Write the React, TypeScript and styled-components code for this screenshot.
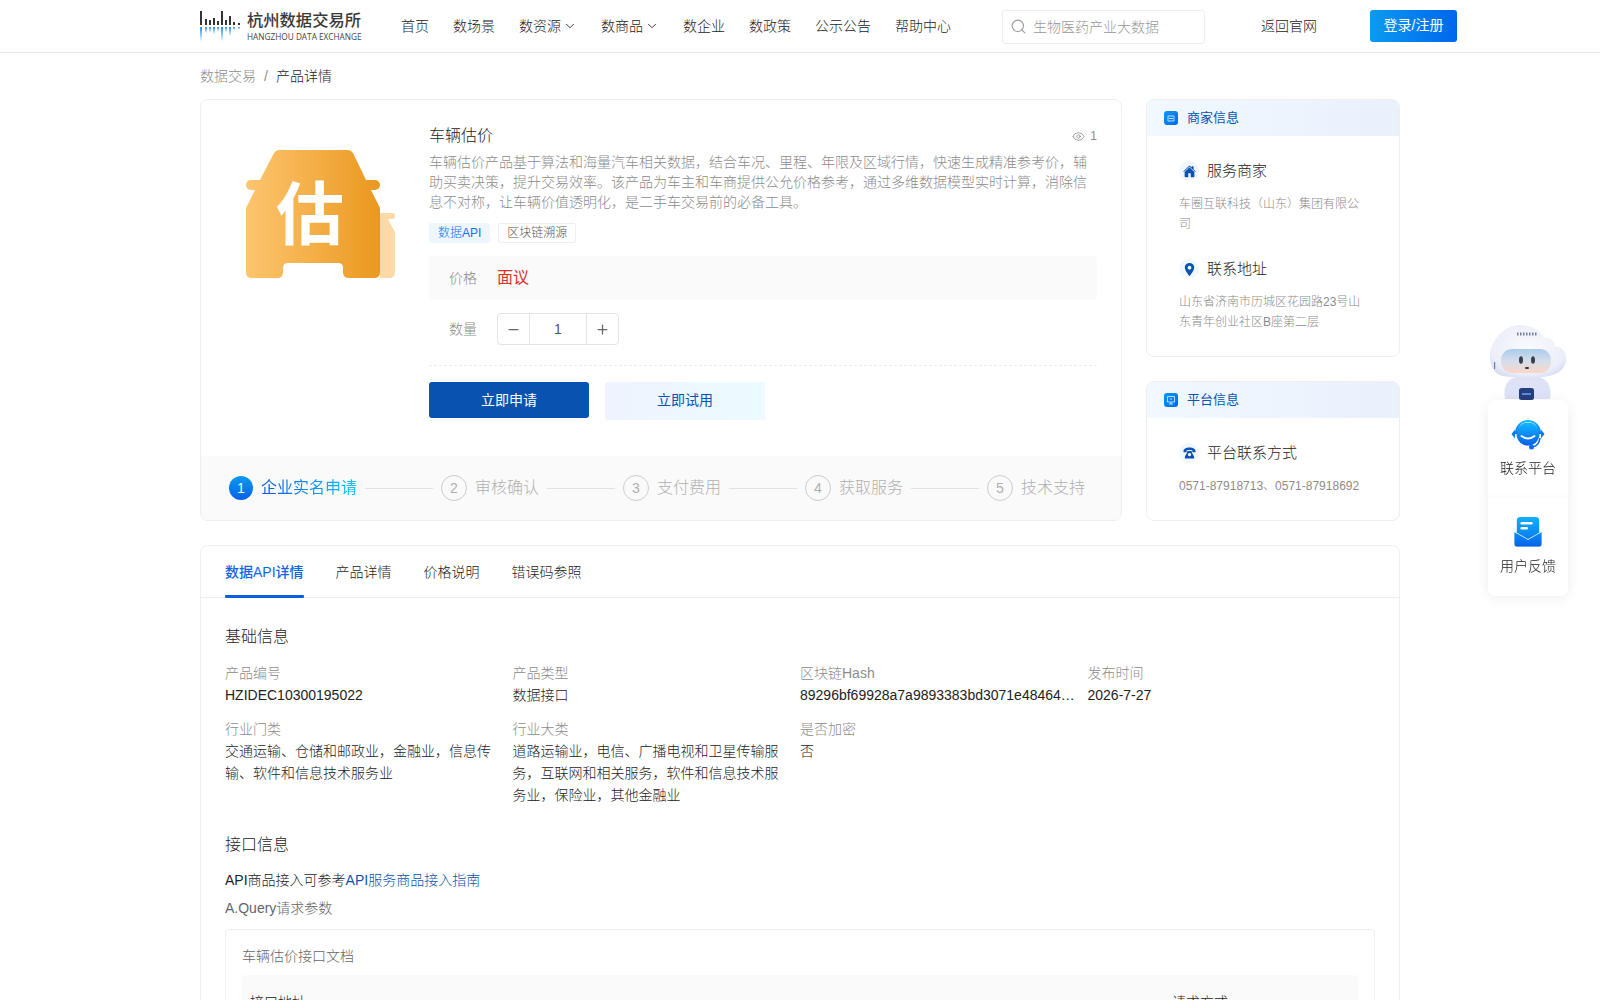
import styled, { createGlobalStyle } from "styled-components";
import { ChevronDown, Eye, Minus, Plus, Search } from "lucide-react";
import { IoHome, IoLocationSharp } from "react-icons/io5";

const navItems = [
  { label: "首页" },
  { label: "数场景" },
  { label: "数资源", menu: true },
  { label: "数商品", menu: true },
  { label: "数企业" },
  { label: "数政策" },
  { label: "公示公告" },
  { label: "帮助中心" },
];

const steps = ["企业实名申请", "审核确认", "支付费用", "获取服务", "技术支持"];

const tabs = ["数据API详情", "产品详情", "价格说明", "错误码参照"];

const baseInfo = [
  { label: "产品编号", value: "HZIDEC10300195022" },
  { label: "产品类型", value: "数据接口" },
  {
    label: "区块链Hash",
    value: "89296bf69928a7a9893383bd3071e484640c1f5e7a2d",
    clip: true,
  },
  { label: "发布时间", value: "2026-7-27" },
  {
    label: "行业门类",
    value: "交通运输、仓储和邮政业，金融业，信息传输、软件和信息技术服务业",
  },
  {
    label: "行业大类",
    value:
      "道路运输业，电信、广播电视和卫星传输服务，互联网和相关服务，软件和信息技术服务业，保险业，其他金融业",
  },
  { label: "是否加密", value: "否" },
];

const logoBars = [
  [0, 14],
  [5, 6],
  [9, 5],
  [13, 7],
  [17, 4],
  [21, 14],
  [25, 5],
  [29, 9],
  [33, 3],
  [38, 2],
];

const Logo = () => (
  <LogoWrap>
    <svg width="42" height="32" viewBox="0 0 42 32">
      <defs>
        <linearGradient id="logoFade" x1="0" y1="0" x2="0" y2="1">
          <stop offset="0" stopColor="#1f8cf5" />
          <stop offset="1" stopColor="#1f8cf5" stopOpacity="0.05" />
        </linearGradient>
      </defs>
      {logoBars.map(([x, h]) => (
        <g key={x}>
          <rect x={x} y={15 - h} width="2" height={h} fill="#333" />
          <rect x={x} y="17" width="2" height={h} fill="url(#logoFade)" />
        </g>
      ))}
    </svg>
    <LogoText>
      <LogoName>杭州数据交易所</LogoName>
      <LogoSub>HANGZHOU DATA EXCHANGE</LogoSub>
    </LogoText>
  </LogoWrap>
);

const CAR_PATH =
  "M28 3Q30 0 33 0H102Q105 0 107 3L120 30H129a5 5 0 0 1 0 10H125L134 58V122q0 6-6 6H103q-6 0-6-6v-4q0-5-5-5H42q-5 0-5 5v4q0 6-6 6H6q-6 0-6-6V58L9 40H5a5 5 0 0 1 0-10H14Z";

const CarImage = () => (
  <svg width="149" height="128" viewBox="0 0 149 128">
    <defs>
      <linearGradient id="carFill" x1="0" y1="0" x2="1" y2="0">
        <stop offset="0" stopColor="#fdc56f" />
        <stop offset="1" stopColor="#ea981f" />
      </linearGradient>
    </defs>
    <path
      d="M134 63H146a3 3 0 0 1 0 6H142L149 82V122q0 6-6 6H134Z"
      fill="#fdd9a8"
    />
    <path d={CAR_PATH} fill="url(#carFill)" />
    <CarGlyph x="64" y="89" textAnchor="middle">
      估
    </CarGlyph>
  </svg>
);

const PanelIcon = ({ kind }: { kind: "shop" | "screen" }) => (
  <svg width="14" height="14" viewBox="0 0 14 14">
    <defs>
      <linearGradient id={`panel-${kind}`} x1="0" y1="0" x2="1" y2="1">
        <stop offset="0" stopColor="#0a9bf0" />
        <stop offset="1" stopColor="#0066ee" />
      </linearGradient>
    </defs>
    <rect width="14" height="14" rx="3" fill={`url(#panel-${kind})`} />
    {kind === "shop" ? (
      <path
        d="M4 5h6v5H4zM5 7.500h4"
        fill="none"
        stroke="#cfe6ff"
        strokeWidth="0.9"
      />
    ) : (
      <path
        d="M3.500 3.500h7v5.500h-7zM7 9v2M5 11h4M6 6h2"
        fill="none"
        stroke="#cfe6ff"
        strokeWidth="0.9"
      />
    )}
  </svg>
);

const PhoneGlyph = () => (
  <svg width="13" height="12" viewBox="0 0 13 12">
    <path
      d="M0.500 4.200C0.500 1.800 3.200 0.500 6.500 0.500s6 1.300 6 3.700v1H9.400V3.400C8.600 3 7.600 2.900 6.500 2.900S4.400 3 3.600 3.400v1.800H0.500Z"
      fill="#0a52b0"
    />
    <path
      d="M4.500 4h4l0.600 2 2 3.600V11.500H1.900V9.600L3.900 6Zm2 1.900a1.700 1.700 0 1 0 0 3.400 1.700 1.700 0 0 0 0-3.400Z"
      fill="#0a52b0"
    />
  </svg>
);

const ContactIcon = () => (
  <ContactArt width="34" height="32" viewBox="0 0 34 32">
    <defs>
      <linearGradient id="contactFill" x1="0" y1="0" x2="0" y2="1">
        <stop offset="0" stopColor="#12b8ff" />
        <stop offset="1" stopColor="#0560ea" />
      </linearGradient>
    </defs>
    <path
      d="M5 15C5 7 10.500 2 17 2s12 5 12 13"
      fill="none"
      stroke="url(#contactFill)"
      strokeWidth="2"
    />
    <path d="M4 10.500 0.500 15 4 19.500Z" fill="#0a7bf0" />
    <path d="M30 10.500 33.500 15 30 19.500Z" fill="#0a7bf0" />
    <circle cx="17" cy="15" r="11.500" fill="url(#contactFill)" />
    <path
      d="M10.500 17q6.500 5 13 0"
      fill="none"
      stroke="#fff"
      strokeWidth="2"
      strokeLinecap="round"
    />
    <path d="M29 19q-1 8-8 9" fill="none" stroke="#0a6bf0" strokeWidth="1.600" />
    <circle cx="20.500" cy="28" r="2.500" fill="#0a6bf0" />
  </ContactArt>
);

const FeedbackIcon = () => (
  <svg width="28" height="30" viewBox="0 0 30 30" preserveAspectRatio="none">
    <defs>
      <linearGradient id="mailTop" x1="0" y1="0" x2="0" y2="1">
        <stop offset="0" stopColor="#12b0fb" />
        <stop offset="1" stopColor="#0a7bf0" />
      </linearGradient>
      <linearGradient id="mailBody" x1="0" y1="0" x2="0" y2="1">
        <stop offset="0" stopColor="#0a8ff5" />
        <stop offset="1" stopColor="#0560ea" />
      </linearGradient>
    </defs>
    <rect x="3" y="0" width="24" height="22" rx="3.500" fill="url(#mailTop)" />
    <rect x="7" y="5" width="13" height="2.400" rx="1.200" fill="#fff" />
    <rect x="7" y="10" width="8" height="2.400" rx="1.200" fill="#fff" />
    <path
      d="M0 14.500 15 22.500 30 14.500V27a3 3 0 0 1-3 3H3a3 3 0 0 1-3-3Z"
      fill="url(#mailBody)"
      stroke="#fff"
      strokeWidth="0.8"
    />
  </svg>
);

const Robot = () => (
  <RobotArt width="78" height="75" viewBox="0 0 78 75">
    <defs>
      <radialGradient id="robotHead" cx="0.5" cy="0.45" r="0.65">
        <stop offset="0" stopColor="#fafbfe" />
        <stop offset="0.75" stopColor="#eceef9" />
        <stop offset="1" stopColor="#cfd5ef" />
      </radialGradient>
      <linearGradient id="robotVisor" x1="0" y1="0" x2="0" y2="1">
        <stop offset="0" stopColor="#a9cbea" />
        <stop offset="0.5" stopColor="#d4deec" />
        <stop offset="1" stopColor="#fbd6c8" />
      </linearGradient>
      <filter id="robotSoft">
        <feGaussianBlur stdDeviation="0.6" />
      </filter>
    </defs>
    <g filter="url(#robotSoft)">
      <path d="M16 74q-3-17 10-22h24q14 4 11 22Z" fill="#dde2f7" />
      <path
        d="M1 33C0 18 14 0 31 0c11 0 20 5 24 13 6-1 11 3 11 8 8 1 12 8 11 14-1 9-8 14-17 16-8 2-36 2-46 0C7 50 1 42 1 33Z"
        fill="url(#robotHead)"
      />
      <rect x="12" y="24" width="50" height="24" rx="11" fill="url(#robotVisor)" />
    </g>
    <rect x="30" y="63" width="15" height="12" rx="2.500" fill="#25407e" />
    <rect x="33" y="68" width="9" height="2" fill="#5b8fd8" />
    <path d="M28 9h20" stroke="#6f7f9c" strokeWidth="3" strokeDasharray="1.500 1.500" />
    <ellipse cx="32" cy="35" rx="2" ry="3.800" fill="#3b3f4d" />
    <ellipse cx="44" cy="35" rx="2" ry="3.800" fill="#3b3f4d" />
    <ellipse cx="38" cy="43" rx="2.200" ry="1.100" fill="#2c2c33" />
    <rect x="5" y="37" width="1.200" height="7" fill="#6f7f9c" />
  </RobotArt>
);

const App = () => {
  return (
    <>
      <GlobalStyle />
      <Header>
        <Logo />
        <Nav>
          {navItems.map((item) => (
            <NavItem key={item.label}>
              {item.label}
              {item.menu && <ChevronDown size={14} strokeWidth={1.5} />}
            </NavItem>
          ))}
        </Nav>
        <SearchBox>
          <Search size={17} strokeWidth={1.5} color="#999" />
          <span>生物医药产业大数据</span>
        </SearchBox>
        <BackLink>返回官网</BackLink>
        <LoginButton>登录/注册</LoginButton>
      </Header>

      <Page>
        <Breadcrumb>
          <span>数据交易</span>
          <Slash>/</Slash>
          <strong>产品详情</strong>
        </Breadcrumb>

        <TopRow>
          <ProductCard>
            <ProductBody>
              <ImageCol>
                <CarImage />
              </ImageCol>
              <InfoCol>
                <TitleRow>
                  <Title>车辆估价</Title>
                  <Views>
                    <Eye size={13} strokeWidth={1.5} />1
                  </Views>
                </TitleRow>
                <Desc>
                  车辆估价产品基于算法和海量汽车相关数据，结合车况、里程、年限及区域行情，快速生成精准参考价，辅助买卖决策，提升交易效率。该产品为车主和车商提供公允价格参考，通过多维数据模型实时计算，消除信息不对称，让车辆价值透明化，是二手车交易前的必备工具。
                </Desc>
                <Tags>
                  <Tag $primary>数据API</Tag>
                  <Tag>区块链溯源</Tag>
                </Tags>
                <PriceRow>
                  <FieldLabel>价格</FieldLabel>
                  <Price>面议</Price>
                </PriceRow>
                <QtyRow>
                  <FieldLabel>数量</FieldLabel>
                  <Stepper>
                    <StepButton>
                      <Minus size={15} strokeWidth={2} />
                    </StepButton>
                    <StepValue>1</StepValue>
                    <StepButton>
                      <Plus size={15} strokeWidth={2} />
                    </StepButton>
                  </Stepper>
                </QtyRow>
                <Actions>
                  <ApplyButton>立即申请</ApplyButton>
                  <TryButton>立即试用</TryButton>
                </Actions>
              </InfoCol>
            </ProductBody>
            <Steps>
              {steps.map((step, index) => (
                <Step key={step}>
                  {index > 0 && <StepLine />}
                  <StepNumber $active={index === 0}>{index + 1}</StepNumber>
                  <StepText $active={index === 0}>{step}</StepText>
                </Step>
              ))}
            </Steps>
          </ProductCard>

          <SideCol>
            <SideCard>
              <SideHeader>
                <PanelIcon kind="shop" />
                商家信息
              </SideHeader>
              <SideBody>
                <SideItem>
                  <SideTitle>
                    <IconDot>
                      <IoHome size={13} />
                    </IconDot>
                    服务商家
                  </SideTitle>
                  <SideText>车圈互联科技（山东）集团有限公司</SideText>
                </SideItem>
                <SideItem>
                  <SideTitle>
                    <IconDot>
                      <IoLocationSharp size={15} />
                    </IconDot>
                    联系地址
                  </SideTitle>
                  <SideText>山东省济南市历城区花园路23号山东青年创业社区B座第二层</SideText>
                </SideItem>
              </SideBody>
            </SideCard>
            <SideCard>
              <SideHeader>
                <PanelIcon kind="screen" />
                平台信息
              </SideHeader>
              <SideBody>
                <SideItem>
                  <SideTitle>
                    <IconDot>
                      <PhoneGlyph />
                    </IconDot>
                    平台联系方式
                  </SideTitle>
                  <SideText>0571-87918713、0571-87918692</SideText>
                </SideItem>
              </SideBody>
            </SideCard>
          </SideCol>
        </TopRow>

        <DetailCard>
          <TabBar>
            {tabs.map((tab, index) => (
              <Tab key={tab} $active={index === 0}>
                {tab}
              </Tab>
            ))}
          </TabBar>
          <DetailBody>
            <SectionTitle>基础信息</SectionTitle>
            <InfoGrid>
              {baseInfo.map((item) => (
                <InfoCell key={item.label}>
                  <InfoLabel>{item.label}</InfoLabel>
                  <InfoValue $clip={item.clip}>{item.value}</InfoValue>
                </InfoCell>
              ))}
            </InfoGrid>
            <ApiTitle>接口信息</ApiTitle>
            <GuideLine>
              API商品接入可参考<GuideLink>API服务商品接入指南</GuideLink>
            </GuideLine>
            <QueryLine>A.Query请求参数</QueryLine>
            <DocBox>
              <DocTitle>车辆估价接口文档</DocTitle>
              <DocHead>
                <span>接口地址</span>
                <span>请求方式</span>
              </DocHead>
            </DocBox>
          </DetailBody>
        </DetailCard>
      </Page>

      <Floating>
        <Robot />
        <FloatPanel>
          <FloatItem>
            <ContactIcon />
            联系平台
          </FloatItem>
          <FloatItem>
            <FeedbackIcon />
            用户反馈
          </FloatItem>
        </FloatPanel>
      </Floating>
    </>
  );
};

export default App;

const GlobalStyle = createGlobalStyle`
  html, body {
    margin: 0;
    height: 100%;
    overflow: hidden;
    background: #fff;
  }

  body {
    font-family: "Liberation Sans", "Noto Sans CJK SC", sans-serif;
    font-size: 14px;
    font-weight: 300;
    line-height: 22px;
    color: #222;
  }

  * {
    box-sizing: border-box;
  }
`;

const Header = styled.header`
  display: flex;
  align-items: center;
  height: 53px;
  padding: 0 143px 0 200px;
  border-bottom: 1px solid #e8e8e8;
`;

const LogoWrap = styled.div`
  display: flex;
  align-items: center;
  flex: none;
  gap: 5px;
  width: 161px;
  height: 52px;
`;

const LogoText = styled.div`
  display: flex;
  flex-direction: column;
  width: 114px;
`;

const LogoName = styled.div`
  font-size: 16.3px;
  line-height: 22px;
  font-weight: 500;
  color: #3a3a3a;
  white-space: nowrap;
`;

const LogoSub = styled.div`
  font-family: "Open Sans", sans-serif;
  font-size: 8.25px;
  font-weight: 400;
  line-height: 12px;
  color: #444;
  white-space: nowrap;
`;

const Nav = styled.nav`
  display: flex;
  flex: none;
  gap: 24px;
  margin-left: 40px;
`;

const NavItem = styled.a`
  display: flex;
  align-items: center;
  gap: 2px;
  color: #222;
  white-space: nowrap;
`;

const SearchBox = styled.div`
  display: flex;
  align-items: center;
  flex: none;
  gap: 6px;
  width: 203px;
  height: 34px;
  margin: 1px 0 0 51px;
  padding-left: 7px;
  border: 1px solid #eee;
  border-radius: 3px;
  color: #999;
  white-space: nowrap;
`;

const BackLink = styled.a`
  flex: none;
  margin-left: 56px;
  color: #222;
`;

const LoginButton = styled.button`
  flex: none;
  width: 87px;
  height: 32px;
  margin-left: 53px;
  padding: 0 0 2px;
  border: 0;
  border-radius: 3px;
  background: linear-gradient(90deg, #0a9bf0, #0065ee);
  color: #fff;
  font: inherit;
  font-weight: 400;
`;

const Page = styled.main`
  width: 1200px;
  margin: 0 auto;
`;

const Breadcrumb = styled.div`
  display: flex;
  align-items: center;
  height: 46px;
  color: #8c8c8c;

  strong {
    font-weight: 300;
    color: #222;
  }
`;

const Slash = styled.span`
  margin: 0 8px;
`;

const TopRow = styled.div`
  display: flex;
  gap: 24px;
`;

const ProductCard = styled.section`
  display: flex;
  flex-direction: column;
  width: 922px;
  border: 1px solid #eee;
  border-radius: 8px;
  overflow: hidden;
`;

const ProductBody = styled.div`
  display: flex;
  flex: 1;
  padding: 23px 24px 0 45px;
`;

const ImageCol = styled.div`
  flex: none;
  width: 149px;
  margin-right: 34px;
  padding-top: 27px;
`;

const CarGlyph = styled.text`
  font-family: "Noto Sans CJK SC", sans-serif;
  font-size: 68px;
  font-weight: 700;
  fill: #fff;
`;

const InfoCol = styled.div`
  flex: 1;
  min-width: 0;
`;

const TitleRow = styled.div`
  display: flex;
  align-items: center;
  justify-content: space-between;
  height: 24px;
  padding-top: 2px;
`;

const Title = styled.h1`
  margin: 0;
  font-size: 16px;
  font-weight: 300;
  color: #222;
`;

const Views = styled.span`
  display: flex;
  align-items: center;
  gap: 5px;
  font-size: 12px;
  color: #8c8c8c;
`;

const Desc = styled.p`
  margin: 5px 0 0;
  line-height: 20px;
  color: #8c8c8c;
`;

const Tags = styled.div`
  display: flex;
  gap: 8px;
  margin-top: 11px;
`;

const Tag = styled.span<{ $primary?: boolean }>`
  height: 20px;
  padding: 0 8px;
  border: 1px solid ${(p) => (p.$primary ? "#eef6ff" : "#eee")};
  border-radius: 2px;
  background: ${(p) => (p.$primary ? "#eef6ff" : "#fff")};
  color: ${(p) => (p.$primary ? "#0f6ff5" : "#555")};
  font-size: 12px;
  line-height: 18px;
`;

const PriceRow = styled.div`
  display: flex;
  align-items: center;
  height: 44px;
  margin-top: 13px;
  padding-left: 20px;
  border-radius: 4px;
  background: #fafafa;
`;

const FieldLabel = styled.span`
  width: 48px;
  color: #8c8c8c;
`;

const Price = styled.span`
  font-size: 16px;
  font-weight: 400;
  color: #d9302b;
`;

const QtyRow = styled.div`
  display: flex;
  align-items: center;
  height: 32px;
  margin-top: 13px;
  padding-left: 20px;
`;

const Stepper = styled.div`
  display: flex;
  height: 32px;
  border: 1px solid #e4e4e4;
  border-radius: 4px;
`;

const StepButton = styled.span`
  display: flex;
  align-items: center;
  justify-content: center;
  width: 31px;
  color: #666;
`;

const StepValue = styled.span`
  width: 58px;
  border-left: 1px solid #e4e4e4;
  border-right: 1px solid #e4e4e4;
  line-height: 30px;
  text-align: center;
  color: #555;
`;

const Actions = styled.div`
  display: flex;
  align-items: flex-start;
  gap: 16px;
  margin-top: 20px;
  padding-top: 16px;
  border-top: 1px dashed #eee;
`;

const ApplyButton = styled.button`
  width: 160px;
  height: 36px;
  padding: 0;
  border: 0;
  border-radius: 3px;
  background: #0a52b0;
  color: #fff;
  font: inherit;
  font-weight: 400;
`;

const TryButton = styled.button`
  width: 160px;
  height: 38px;
  padding: 0 0 2px;
  border: 0;
  border-radius: 3px;
  background: linear-gradient(90deg, #eef3fe, #ecfbff);
  color: #0a52b0;
  font: inherit;
  font-weight: 400;
`;

const Steps = styled.div`
  display: flex;
  align-items: center;
  justify-content: space-between;
  flex: none;
  height: 64px;
  padding: 0 36px 0 28px;
  background: #fafafa;
`;

const Step = styled.div`
  display: flex;
  align-items: center;
  gap: 8px;
`;

const StepLine = styled.span`
  width: 68px;
  height: 1px;
  background: #e2e2e2;
`;

const StepNumber = styled.span<{ $active: boolean }>`
  display: flex;
  align-items: center;
  justify-content: center;
  width: ${(p) => (p.$active ? "24px" : "26px")};
  height: ${(p) => (p.$active ? "24px" : "26px")};
  border-radius: 50%;
  border: ${(p) => (p.$active ? "0" : "1px solid #ccc")};
  background: ${(p) =>
    p.$active ? "linear-gradient(180deg, #0a9bf0, #0560ea)" : "transparent"};
  color: ${(p) => (p.$active ? "#fff" : "#b0b0b0")};
  font-size: 14px;
`;

const StepText = styled.span<{ $active: boolean }>`
  font-size: 16px;
  color: #b0b0b0;
  ${(p) =>
    p.$active &&
    `
    font-weight: 400;
    background: linear-gradient(90deg, #0a55e0, #10c8ff);
    -webkit-background-clip: text;
    background-clip: text;
    color: transparent;
  `}
`;

const SideCol = styled.aside`
  display: flex;
  flex-direction: column;
  gap: 24px;
  width: 254px;
`;

const SideCard = styled.section`
  border: 1px solid #eee;
  border-radius: 8px;
  overflow: hidden;
`;

const SideHeader = styled.div`
  display: flex;
  align-items: center;
  gap: 9px;
  height: 36px;
  padding-left: 17px;
  background: linear-gradient(90deg, #f1f8ff, #e8f1fc);
  color: #0a52b0;
  font-size: 13px;
  font-weight: 400;
`;

const SideBody = styled.div`
  display: flex;
  flex-direction: column;
  gap: 25px;
  padding: 25px 32px 24px;
`;

const SideItem = styled.div``;

const SideTitle = styled.div`
  display: flex;
  align-items: center;
  gap: 8px;
  height: 20px;
  font-size: 15px;
  color: #222;
`;

const IconDot = styled.span`
  display: flex;
  align-items: center;
  justify-content: center;
  width: 20px;
  height: 20px;
  border-radius: 50%;
  background: #f1f7fe;
  color: #0a52b0;
`;

const SideText = styled.p`
  margin: 13px 0 0;
  font-size: 12px;
  line-height: 20px;
  color: #8c8c8c;
`;

const DetailCard = styled.section`
  margin-top: 24px;
  border: 1px solid #eee;
  border-radius: 8px 8px 0 0;
`;

const TabBar = styled.div`
  display: flex;
  gap: 32px;
  height: 52px;
  padding: 0 24px;
  border-bottom: 1px solid #eee;
`;

const Tab = styled.a<{ $active: boolean }>`
  position: relative;
  line-height: 53px;
  color: ${(p) => (p.$active ? "#0a66e8" : "#222")};
  font-weight: ${(p) => (p.$active ? 500 : 300)};

  &::after {
    content: "";
    display: ${(p) => (p.$active ? "block" : "none")};
    position: absolute;
    left: 0;
    right: 0;
    bottom: -1px;
    height: 3px;
    border-radius: 1px;
    background: #0a5fe0;
  }
`;

const DetailBody = styled.div`
  padding: 27px 24px 0;
`;

const SectionTitle = styled.h2`
  margin: 0;
  font-size: 16px;
  font-weight: 300;
  line-height: 24px;
  color: #222;
`;

const ApiTitle = styled(SectionTitle)`
  margin-top: 27px;
`;

const InfoGrid = styled.div`
  display: grid;
  grid-template-columns: repeat(4, 1fr);
  row-gap: 12px;
  margin-top: 13px;
`;

const InfoCell = styled.div`
  min-width: 0;
  padding-right: 12px;
`;

const InfoLabel = styled.div`
  color: #8c8c8c;
`;

const InfoValue = styled.div<{ $clip?: boolean }>`
  color: #222;
  ${(p) =>
    p.$clip &&
    `
    overflow: hidden;
    white-space: nowrap;
    text-overflow: ellipsis;
  `}
`;

const GuideLine = styled.div`
  margin-top: 12px;
  color: #222;
`;

const GuideLink = styled.a`
  color: #0a52b0;
`;

const QueryLine = styled.div`
  margin-top: 6px;
  color: #666;
`;

const DocBox = styled.div`
  margin-top: 10px;
  padding: 15px 16px 16px;
  border: 1px solid #eee;
  border-radius: 4px;
`;

const DocTitle = styled.div`
  color: #666;
`;

const DocHead = styled.div`
  display: grid;
  grid-template-columns: 922px 1fr;
  margin-top: 8px;
  padding: 16px 8px;
  border-radius: 4px;
  background: #fafafa;
  color: #222;
`;

const Floating = styled.div`
  position: fixed;
  top: 325px;
  right: 32px;
  display: flex;
  flex-direction: column;
  align-items: center;
  width: 80px;
`;

const RobotArt = styled.svg`
  display: block;
`;

const ContactArt = styled.svg`
  margin-bottom: -2px;
`;

const FloatPanel = styled.div`
  width: 80px;
  border-radius: 8px;
  background: #fff;
  box-shadow: 0 2px 14px rgba(0, 0, 0, 0.07);
`;

const FloatItem = styled.div`
  display: flex;
  flex-direction: column;
  align-items: center;
  gap: 8px;
  height: 98px;
  padding-top: 19px;
  color: #222;
  white-space: nowrap;

  & + & {
    box-shadow: 0 -2px 6px rgba(0, 0, 0, 0.025);
  }
`;
